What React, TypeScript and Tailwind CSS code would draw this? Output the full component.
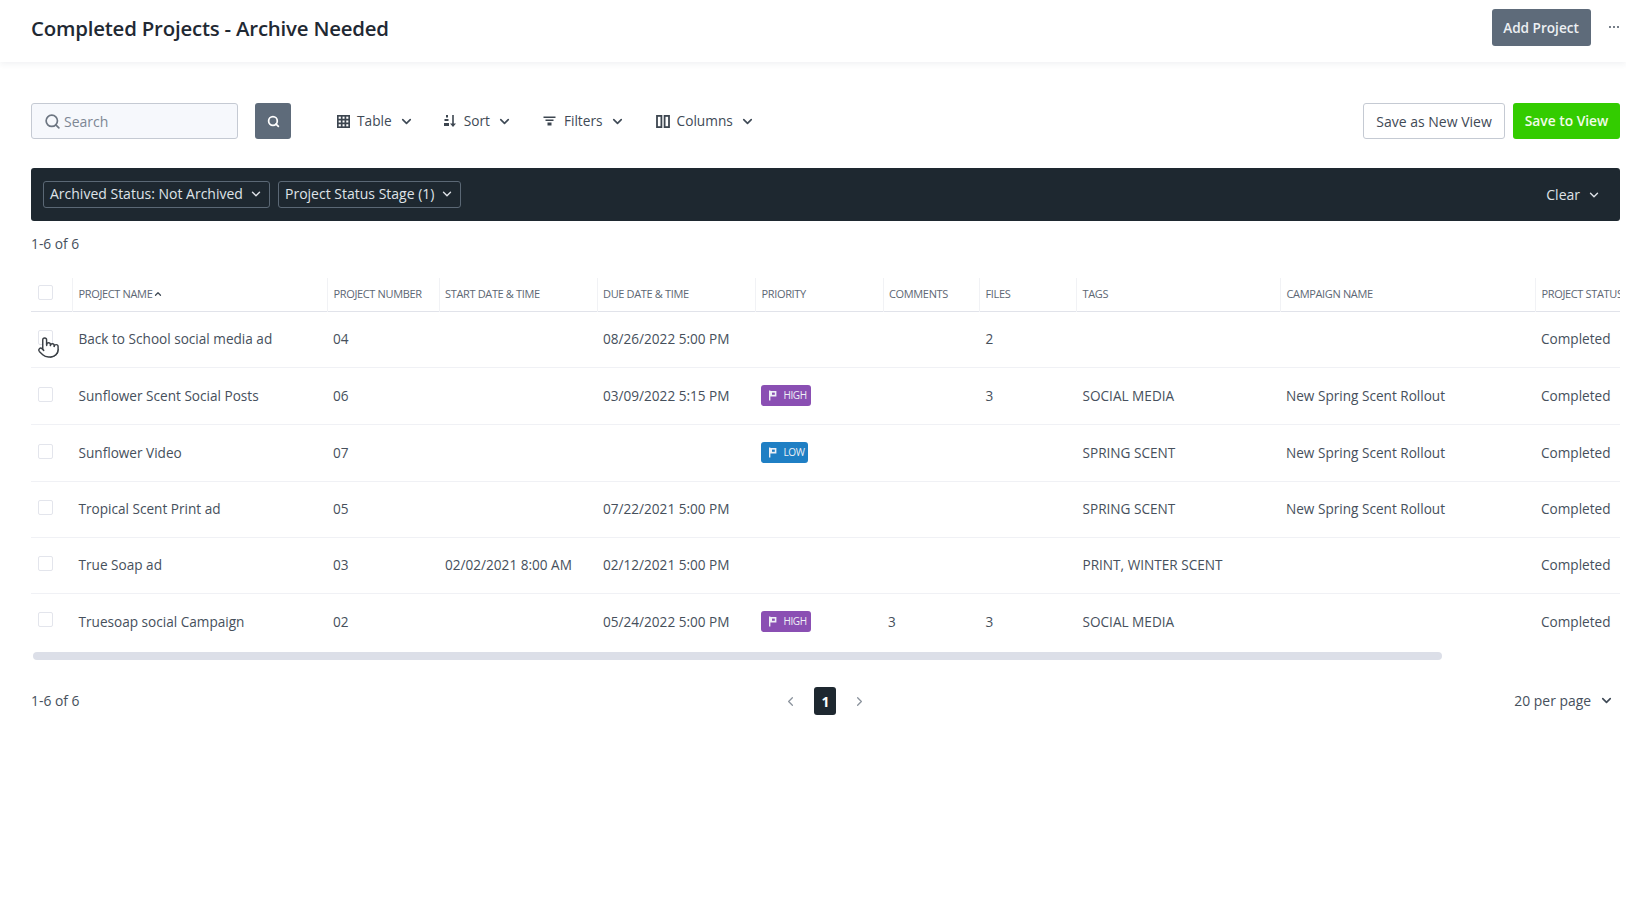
import React from "react";
import { ChevronDown, ChevronUp, ChevronLeft, ChevronRight, Search, Pointer } from "lucide-react";

const cols = [41.5, 255, 111.5, 158, 158.5, 127.5, 96.5, 97, 204, 255, 84];
const heads = ["PROJECT NUMBER", "START DATE & TIME", "DUE DATE & TIME", "PRIORITY", "COMMENTS", "FILES", "TAGS", "CAMPAIGN NAME", "PROJECT STATUS"];

type Row = { name: string; num: string; start?: string; due?: string; pri?: "HIGH" | "LOW"; comments?: string; files?: string; tags?: string; camp?: string; h: string };
const rows: Row[] = [
  { name: "Back to School social media ad", num: "04", due: "08/26/2022 5:00 PM", files: "2", h: "h-[56px]" },
  { name: "Sunflower Scent Social Posts", num: "06", due: "03/09/2022 5:15 PM", pri: "HIGH", files: "3", tags: "SOCIAL MEDIA", camp: "New Spring Scent Rollout", h: "h-[57px]" },
  { name: "Sunflower Video", num: "07", pri: "LOW", tags: "SPRING SCENT", camp: "New Spring Scent Rollout", h: "h-[57px]" },
  { name: "Tropical Scent Print ad", num: "05", due: "07/22/2021 5:00 PM", tags: "SPRING SCENT", camp: "New Spring Scent Rollout", h: "h-[56px]" },
  { name: "True Soap ad", num: "03", start: "02/02/2021 8:00 AM", due: "02/12/2021 5:00 PM", tags: "PRINT, WINTER SCENT", h: "h-[56px]" },
  { name: "Truesoap social Campaign", num: "02", due: "05/24/2022 5:00 PM", pri: "HIGH", comments: "3", files: "3", tags: "SOCIAL MEDIA", h: "h-[56px]" },
];

function Flag() {
  return (
    <svg width="10" height="11" viewBox="0 0 10 11" className="shrink-0">
      <path d="M1 0.5h1.400v10H1z M2.400 1h6v5.500h-6z" fill="#eef0f6" />
      <path d="M4 2.600h2.800v2.200H4z" fill="currentColor" />
    </svg>
  );
}

function Badge({ kind }: { kind: "HIGH" | "LOW" }) {
  const high = kind === "HIGH";
  return (
    <span className={`inline-flex h-[21px] items-center gap-[6px] rounded-[3px] pl-[7px] text-[10px] tracking-[-0.4px] text-[#eef0f6] ${high ? "w-[50px] bg-[#8a4fb3]" : "w-[47px] bg-[#1f7fc4]"}`}>
      <span className={high ? "text-[#8a4fb3]" : "text-[#1f7fc4]"}><Flag /></span>
      {kind}
    </span>
  );
}

function Box() {
  return <span className="block h-[15px] w-[15px] rounded-[2px] border border-[#e3e5ec] bg-white" />;
}

function Tool({ icon, label, className }: { icon: React.ReactNode; label: string; className: string }) {
  return (
    <div className={`flex items-center pt-[1px] text-[13.7px] font-medium text-[#3f4a56] ${className}`}>
      <span className="flex w-[14px] justify-center text-[#3d4650]">{icon}</span>
      <span className="ml-[7px]">{label}</span>
      <ChevronDown size={15} strokeWidth={2.6} className="ml-[7px] text-[#3f4a56]" />
    </div>
  );
}

function Chip({ label, className }: { label: string; className: string }) {
  return (
    <div className={`flex h-[27px] items-center justify-between rounded-[3px] border border-[#5b6875] pb-[2px] pl-[6px] pr-[6px] text-[14px] font-medium text-[#dfe3e8] ${className}`}>
      <span>{label}</span>
      <ChevronDown size={14} strokeWidth={2.4} />
    </div>
  );
}

export default function App() {
  return (
    <div className="relative min-h-[924px] bg-white text-[#46505c] [font-family:'Open_Sans',sans-serif]">
      <header className="flex h-[62px] justify-between pl-[31px] pr-[6px] shadow-[0_2px_6px_rgba(40,50,80,0.07)]">
        <h1 className="mt-[13px] text-[20.4px] font-semibold leading-[30px] tracking-[-0.2px] text-[#1f2933]">Completed Projects - Archive Needed</h1>
        <div className="mt-[9px] flex h-[37px] items-center">
          <button className="h-[37px] w-[99px] rounded-[3px] bg-[#5e6b7a] pt-[1px] text-[13.6px] font-semibold text-[#edf0f3]">Add Project</button>
          <span className="mb-[1px] ml-[18px] mr-[1px] flex gap-[1.5px]">
            <i className="h-[2.5px] w-[2.5px] rounded-full bg-[#4a5562]" />
            <i className="h-[2.5px] w-[2.5px] rounded-full bg-[#4a5562]" />
            <i className="h-[2.5px] w-[2.5px] rounded-full bg-[#4a5562]" />
          </span>
        </div>
      </header>

      <main className="pl-[31px] pr-[6px]">
        <div className="mt-[41px] flex h-[36px] items-center">
          <div className="flex h-full w-[207px] items-center rounded-[3px] border border-[#c5cad3] bg-[#f6f8fc] pl-[13px] text-[14px] text-[#7d8794]">
            <Search size={17} strokeWidth={2.4} className="-ml-[1px] text-[#6d7682]" />
            <span className="ml-[3px]">Search</span>
          </div>
          <button className="ml-[17px] flex h-full w-[36px] items-center justify-center rounded-[3px] bg-[#5e6b7a] text-white">
            <Search size={13} strokeWidth={3.2} />
          </button>
          <Tool className="ml-[45px]" label="Table" icon={
            <svg width="13" height="13" viewBox="0 0 13 13" fill="none" stroke="currentColor" strokeWidth="1.7"><rect x="0.800" y="0.800" width="11.400" height="11.400" /><path d="M0.800 4.700h11.400M0.800 8.400h11.400M4.700 0.800v11.400M8.400 0.800v11.400" /></svg>
          } />
          <Tool className="ml-[29px]" label="Sort" icon={
            <svg width="14" height="14" viewBox="0 0 14 14" fill="currentColor"><path d="M3 1h2v2.500H3z M1.500 5h4v2h-4z M1 9h5v3H1z" /><path d="M9.200 1h1.600v8.500h2.200L10 13 7 9.500h2.200z" /></svg>
          } />
          <Tool className="ml-[31px]" label="Filters" icon={
            <svg width="13" height="10" viewBox="0 0 13 10" fill="currentColor"><path d="M0.500 0.500h12v1.500h-12z M2.500 3.500h8v1.500h-8z M4.500 6.500h4v3h-4z" /></svg>
          } />
          <Tool className="ml-[31px]" label="Columns" icon={
            <svg width="14" height="13" viewBox="0 0 14 13" fill="none" stroke="currentColor" strokeWidth="1.800"><rect x="1" y="0.900" width="4.400" height="11.200" /><rect x="8.600" y="0.900" width="4.400" height="11.200" /></svg>
          } />
          <button className="ml-auto h-full w-[142px] rounded-[3px] border border-[#c5cad3] bg-white text-[14px] font-medium text-[#3f4a56]">Save as New View</button>
          <button className="ml-[8px] h-full w-[107px] rounded-[3px] bg-[#33cc00] text-[13.8px] font-semibold text-[#f1fbe9]">Save to View</button>
        </div>

        <div className="mt-[29px] flex h-[53px] items-center rounded-[3px] bg-[#1e2830] pl-[12px] pr-[19px]">
          <Chip label="Archived Status: Not Archived" className="w-[227px]" />
          <Chip label="Project Status Stage (1)" className="ml-[8px] w-[183px]" />
          <div className="ml-auto flex items-center text-[14px] font-medium text-[#dfe3e8]">
            Clear
            <ChevronDown size={14} strokeWidth={2.4} className="ml-[7px]" />
          </div>
        </div>

        <p className="mt-[13px] h-[20px] text-[13.8px] leading-[20px] text-[#46505c]">1-6 of 6</p>

        <div className="mt-[24px] overflow-hidden">
          <table className="table-fixed border-collapse text-left" style={{ width: cols.reduce((a, b) => a + b, 0) }}>
            <colgroup>
              {cols.map((w, i) => <col key={i} style={{ width: w }} />)}
            </colgroup>
            <thead>
              <tr className="h-[33px] border-b border-[#e1e3ea] text-[11px] font-normal tracking-[-0.35px] text-[#5d6774]">
                <th className="p-0 pb-[3px] pl-[7px] align-middle font-normal"><Box /></th>
                <th className="border-l border-[#f1f2f5] pl-[5.5px] font-normal">
                  <span className="inline-flex items-center">PROJECT NAME<ChevronUp size={10} strokeWidth={3} className="ml-[1px] text-[#3f4a56]" /></span>
                </th>
                {heads.map((h) => (
                  <th key={h} className="whitespace-nowrap border-l border-[#f1f2f5] pl-[5.5px] font-normal">{h}</th>
                ))}
              </tr>
            </thead>
            <tbody className="text-[13.6px]">
              {rows.map((r, i) => (
                <tr key={r.name} className={`${r.h} ${i < rows.length - 1 ? "border-b border-[#f0f1f5]" : ""}`}>
                  <td className="p-0 pl-[7px] pb-[3px]"><Box /></td>
                  <td className="whitespace-nowrap pl-[6px] pt-[1px]">{r.name}</td>
                  <td className="pl-[5.5px] pt-[1px]">{r.num}</td>
                  <td className="whitespace-nowrap pl-[6px] pt-[1px]">{r.start}</td>
                  <td className="whitespace-nowrap pl-[6px] pt-[1px]">{r.due}</td>
                  <td className="pl-[5px]">{r.pri && <Badge kind={r.pri} />}</td>
                  <td className="pl-[5px] pt-[1px]">{r.comments}</td>
                  <td className="pl-[6px] pt-[1px]">{r.files}</td>
                  <td className="whitespace-nowrap pl-[6px] pt-[1px]">{r.tags}</td>
                  <td className="whitespace-nowrap pl-[5.5px] pt-[1px]">{r.camp}</td>
                  <td className="pl-[5.5px] pt-[1px]">Completed</td>
                </tr>
              ))}
            </tbody>
          </table>
        </div>

        <div className="ml-[2px] mt-[3px] h-[8px] w-[1409px] rounded-full bg-[#dcdfe8]" />

        <div className="mt-[27px] grid h-[28px] grid-cols-3 items-center text-[13.9px]">
          <span>1-6 of 6</span>
          <div className="flex items-center justify-center gap-[16px] text-[#8a929c]">
            <ChevronLeft size={15} strokeWidth={2} />
            <span className="flex h-[28px] w-[22px] items-center justify-center rounded-[3px] bg-[#1e2830] text-[14px] font-bold text-white">1</span>
            <ChevronRight size={15} strokeWidth={2} />
          </div>
          <div className="flex items-center justify-end pr-[6px]">
            20 per page
            <ChevronDown size={15} strokeWidth={2.6} className="ml-[8px] text-[#3f4a56]" />
          </div>
        </div>
      </main>

      <Pointer size={23} strokeWidth={1.5} fill="white" className="absolute left-[37px] top-[336px] text-[#3a3f45]" />
    </div>
  );
}
